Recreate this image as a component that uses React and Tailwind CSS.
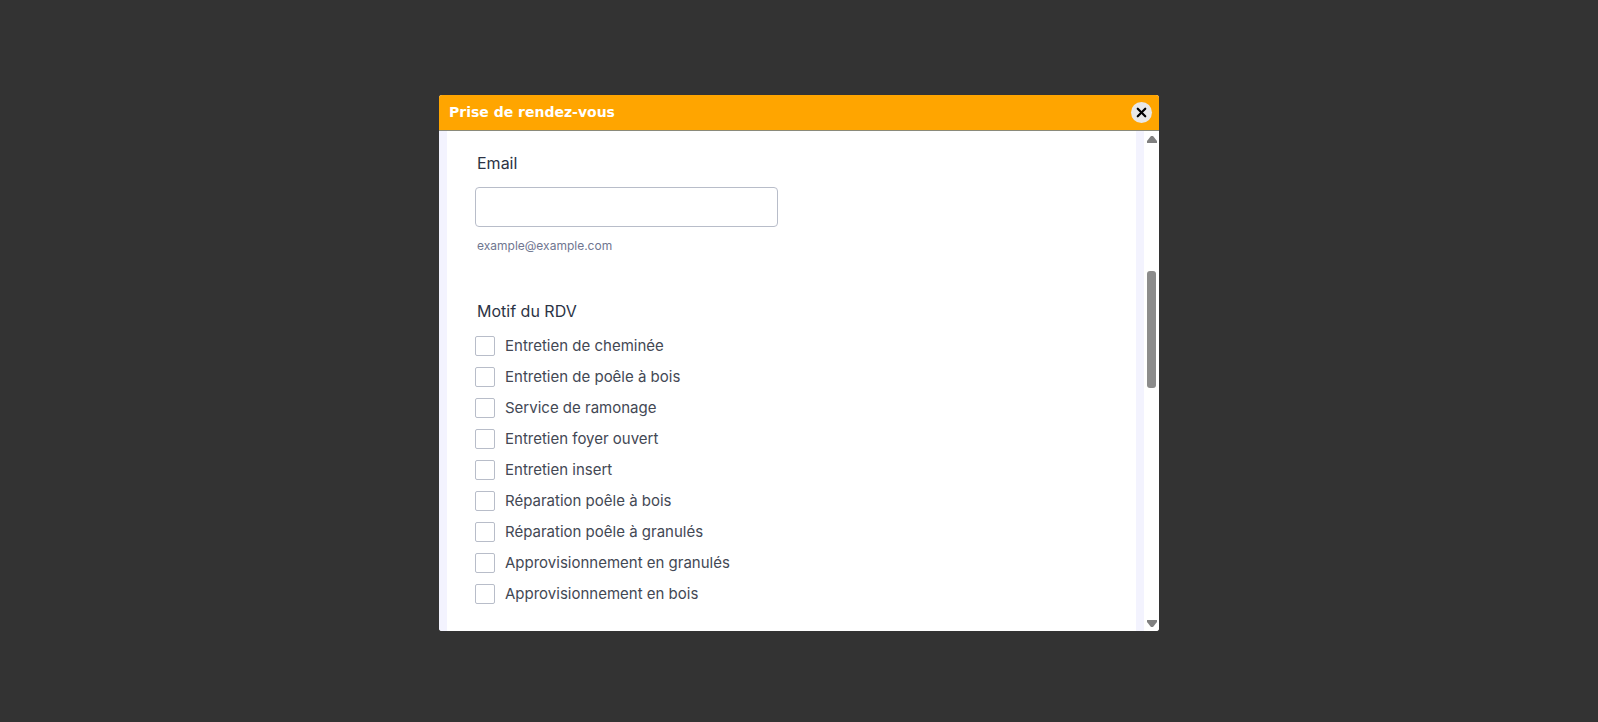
import { X } from "lucide-react";

const motifs = [
  "Entretien de cheminée",
  "Entretien de poêle à bois",
  "Service de ramonage",
  "Entretien foyer ouvert",
  "Entretien insert",
  "Réparation poêle à bois",
  "Réparation poêle à granulés",
  "Approvisionnement en granulés",
  "Approvisionnement en bois",
];

export default function App() {
  return (
    <div className="flex h-[722px] items-start justify-center bg-[#333333] pt-[95px] font-['Inter',sans-serif]">
      <div className="flex h-[536px] w-[720px] flex-col overflow-hidden rounded-[3px] bg-white">
        <div className="flex h-[36px] shrink-0 items-center justify-between border-b border-[#8a8a7a] bg-[#ffa500] pb-[1px] pl-[10px] pr-[7px]">
          <span className="font-['DejaVu_Sans',sans-serif] text-[14px] font-bold text-white">Prise de rendez-vous</span>
          <button className="flex size-[21px] items-center justify-center rounded-full bg-[#e8e8e8]">
            <X size={15} strokeWidth={3.5} className="text-black" />
          </button>
        </div>
        <div className="flex min-h-0 flex-1">
          <div className="w-[8px] bg-[#f3f3fe]" />
          <div className="flex-1 pl-[28px] pt-[22px]">
            <label className="ml-[2px] block text-[16px] leading-[20px] text-[#2c3345]">Email</label>
            <input className="mt-[14px] block h-[40px] w-[303px] rounded-[4px] border border-[#b8bdc9] bg-white" />
            <p className="ml-[2px] mt-[11px] text-[12px] leading-[16px] text-[#6f7690]">example@example.com</p>
            <label className="ml-[2px] mt-[47px] block text-[16px] leading-[20px] text-[#2c3345]">Motif du RDV</label>
            <ul className="mt-[15px] flex flex-col gap-[11px]">
              {motifs.map((motif) => (
                <li key={motif} className="flex h-[20px] items-center gap-[10px]">
                  <span className="size-[20px] rounded-[2px] border border-[#b8bdc9] bg-white" />
                  <span className="text-[15px] text-[#434854]">{motif}</span>
                </li>
              ))}
            </ul>
          </div>
          <div className="w-[8px] bg-[#f3f3fe]" />
          <div className="flex w-[15px] flex-col items-center bg-white pb-[4px] pt-[5px]">
            <svg width="10" height="7" viewBox="0 0 10 7"><path d="M4 0 L6 0 L10 5 L10 7 L0 7 L0 5 Z" fill="#808080" /></svg>
            <div className="mt-[128px] h-[117px] w-[9px] rounded-[3px] bg-[#8c8c8c]" />
            <svg className="mt-auto" width="10" height="7" viewBox="0 0 10 7"><path d="M0 0 L10 0 L10 2 L6 7 L4 7 L0 2 Z" fill="#808080" /></svg>
          </div>
        </div>
      </div>
    </div>
  );
}
